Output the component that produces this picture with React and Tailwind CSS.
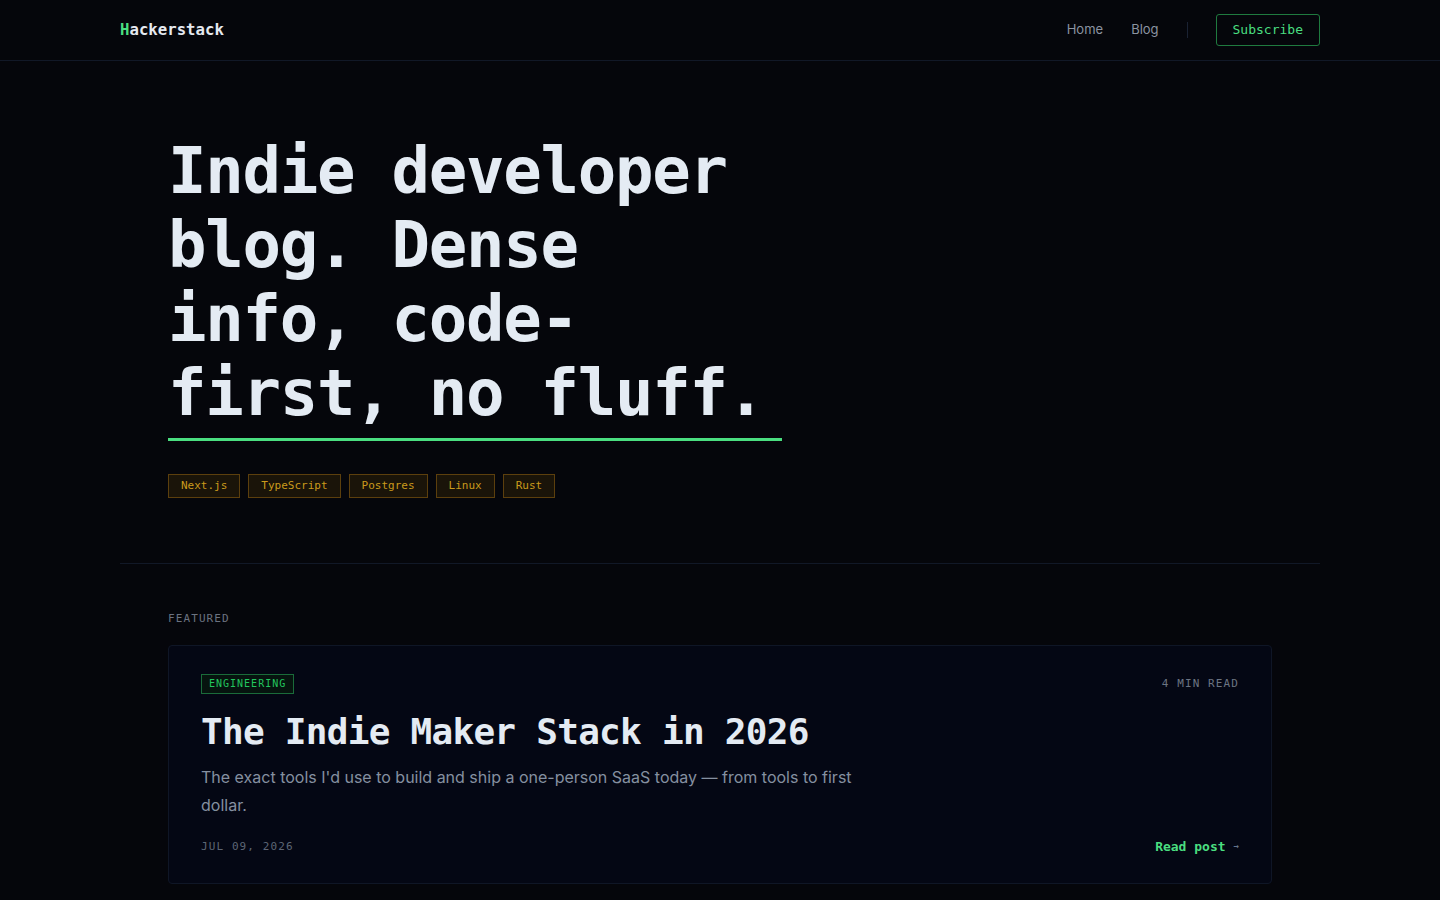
const mono = "font-['DejaVu_Sans_Mono','Liberation_Mono',monospace]";
const sans = "font-['Inter','Noto_Sans',sans-serif]";

const stack = ["Next.js", "TypeScript", "Postgres", "Linux", "Rust"];

function Nav() {
  return (
    <header className="border-b border-[#111827]">
      <div className="max-w-[1200px] mx-auto h-[60px] flex items-center justify-between">
        <a href="#" className={`${mono} text-[15.7px] font-bold text-[#e5e9f0]`}>
          <span className="text-[#4ade80]">H</span>ackerstack
        </a>
        <nav className="flex items-center gap-7">
          <a href="#" className={`${sans} text-[13px] leading-4 -mt-0.5 text-[#8b93a1]`}>Home</a>
          <a href="#" className={`${sans} text-[13px] leading-4 -mt-0.5 text-[#8b93a1]`}>Blog</a>
          <span className="w-px h-4 bg-[#1a2233]" />
          <a
            href="#"
            className={`${mono} text-[13px] text-[#4ade80] border border-[#1f7a3f] rounded-[3px] h-8 px-4 flex items-center`}
          >
            Subscribe
          </a>
        </nav>
      </div>
    </header>
  );
}

function Hero() {
  return (
    <section className="max-w-[1200px] mx-auto px-12 pt-[73px] pb-[65px] border-b border-[#111827]">
      <h1
        className={`${mono} w-[614px] text-[64px] leading-[74px] tracking-[-0.02em] font-bold text-[#e4ebf3] pb-2 border-b-[3px] border-[#4ade80]`}
      >
        Indie developer blog. Dense info, code-first, no fluff.
      </h1>
      <div className="flex gap-2 mt-[33px]">
        {stack.map((t) => (
          <span
            key={t}
            className={`${mono} text-[11px] leading-4 py-[3px] px-3 text-[#c99a1c] bg-[#1a1409] border border-[#5c3f0d]`}
          >
            {t}
          </span>
        ))}
      </div>
    </section>
  );
}

function FeaturedCard() {
  return (
    <article className="bg-[#040714] border border-[#0f1626] rounded-[4px] px-8 pt-7 pb-[26px]">
      <div className="flex items-center justify-between">
        <span
          className={`${mono} text-[10px] leading-[14px] tracking-widest px-[7px] py-[2px] text-[#22c55e] bg-[#06140f] border border-[#1a6b3a]`}
        >
          ENGINEERING
        </span>
        <span className={`${mono} text-[11px] tracking-widest text-[#6b7482]`}>4 MIN READ</span>
      </div>
      <h2 className={`${mono} mt-4 text-[36px] leading-[43px] tracking-[-0.02em] font-bold text-[#e4ebf3]`}>
        The Indie Maker Stack in 2026
      </h2>
      <p className={`${sans} mt-[10px] max-w-2xl text-[16px] leading-7 text-[#8590a0]`}>
        The exact tools I'd use to build and ship a one-person SaaS today — from tools to first dollar.
      </p>
      <div className="mt-[18px] flex items-center justify-between h-5">
        <span className={`${mono} text-[11px] tracking-widest text-[#5d6675]`}>JUL 09, 2026</span>
        <a href="#" className={`${mono} text-[13px] font-semibold text-[#4ade80] flex items-center gap-2`}>
          Read post <span className="text-[9px] text-[#64748b]">→</span>
        </a>
      </div>
    </article>
  );
}

export default function App() {
  return (
    <div className="min-h-screen bg-[#05060b]">
      <Nav />
      <main>
        <Hero />
        <section className="max-w-[1200px] mx-auto px-12 pt-[47px] pb-16">
          <p className={`${mono} text-[11px] leading-4 tracking-widest text-[#6b7280] mb-[18px]`}>FEATURED</p>
          <FeaturedCard />
        </section>
      </main>
    </div>
  );
}
